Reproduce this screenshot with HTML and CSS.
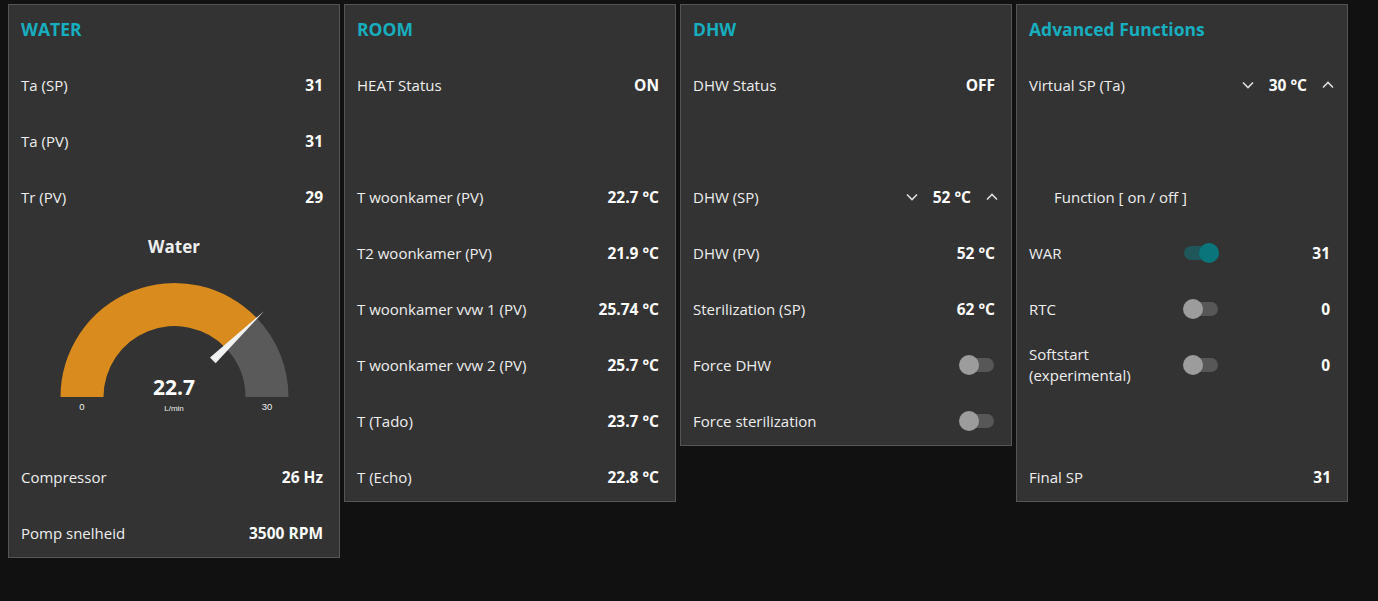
FILE: index.html
```html
<!DOCTYPE html>
<html lang="nl">
<head>
<meta charset="utf-8">
<title>Dashboard</title>
<link rel="stylesheet" href="styles.css">
</head>
<body>
<div class="dash">
  <section class="group">
    <h2 class="group-title">WATER</h2>
    <div class="row"><span class="label">Ta (SP)</span><span class="value">31</span></div>
    <div class="row"><span class="label">Ta (PV)</span><span class="value">31</span></div>
    <div class="row"><span class="label">Tr (PV)</span><span class="value">29</span></div>
    <div class="gauge">
      <svg class="gauge-svg" width="330" height="216" viewBox="0 0 330 216">
        <text class="gauge-title" x="165" y="24" text-anchor="middle">Water</text>
        <path d="M51.5 168 A114 114 0 0 1 247.8 89.1 L216.7 118.9 A71 71 0 0 0 94.5 168 Z" fill="#d98b1d"/>
        <path d="M247.8 89.1 A114 114 0 0 1 279.5 168 L236.5 168 A71 71 0 0 0 216.7 118.9 Z" fill="#5a5a5a"/>
        <polygon points="255,82.2 206.6,134.2 201.0,128.4" fill="#f2f2f2"/>
        <text class="gauge-value" x="165" y="166" text-anchor="middle">22.7</text>
        <text class="gauge-unit" x="165" y="182" text-anchor="middle">L/min</text>
        <text class="gauge-tick" x="73" y="181" text-anchor="middle">0</text>
        <text class="gauge-tick" x="258" y="181" text-anchor="middle">30</text>
      </svg>
    </div>
    <div class="row"><span class="label">Compressor</span><span class="value">26 Hz</span></div>
    <div class="row"><span class="label">Pomp snelheid</span><span class="value">3500 RPM</span></div>
  </section>

  <section class="group">
    <h2 class="group-title">ROOM</h2>
    <div class="row"><span class="label">HEAT Status</span><span class="value">ON</span></div>
    <div class="spacer"></div>
    <div class="row"><span class="label">T woonkamer (PV)</span><span class="value">22.7 °C</span></div>
    <div class="row"><span class="label">T2 woonkamer (PV)</span><span class="value">21.9 °C</span></div>
    <div class="row"><span class="label">T woonkamer vvw 1 (PV)</span><span class="value">25.74 °C</span></div>
    <div class="row"><span class="label">T woonkamer vvw 2 (PV)</span><span class="value">25.7 °C</span></div>
    <div class="row"><span class="label">T (Tado)</span><span class="value">23.7 °C</span></div>
    <div class="row"><span class="label">T (Echo)</span><span class="value">22.8 °C</span></div>
  </section>

  <section class="group">
    <h2 class="group-title">DHW</h2>
    <div class="row"><span class="label">DHW Status</span><span class="value">OFF</span></div>
    <div class="spacer"></div>
    <div class="row numeric"><span class="label">DHW (SP)</span>
      <span class="stepper">
        <svg class="chev" width="12" height="8" viewBox="0 0 12 8"><polyline points="1,1.5 6,6.5 11,1.5"/></svg>
        <span class="value">52 °C</span>
        <svg class="chev" width="12" height="8" viewBox="0 0 12 8"><polyline points="1,6.5 6,1.5 11,6.5"/></svg>
      </span>
    </div>
    <div class="row"><span class="label">DHW (PV)</span><span class="value">52 °C</span></div>
    <div class="row"><span class="label">Sterilization (SP)</span><span class="value">62 °C</span></div>
    <div class="row switch-row"><span class="label">Force DHW</span><span class="toggle"><span class="knob"></span></span></div>
    <div class="row switch-row"><span class="label">Force sterilization</span><span class="toggle"><span class="knob"></span></span></div>
  </section>

  <section class="group">
    <h2 class="group-title">Advanced Functions</h2>
    <div class="row numeric"><span class="label">Virtual SP (Ta)</span>
      <span class="stepper">
        <svg class="chev" width="12" height="8" viewBox="0 0 12 8"><polyline points="1,1.5 6,6.5 11,1.5"/></svg>
        <span class="value">30 °C</span>
        <svg class="chev" width="12" height="8" viewBox="0 0 12 8"><polyline points="1,6.5 6,1.5 11,6.5"/></svg>
      </span>
    </div>
    <div class="spacer"></div>
    <div class="row note"><span class="label">Function [ on / off ]</span></div>
    <div class="row func"><span class="label">WAR</span><span class="toggle on"><span class="knob"></span></span><span class="value">31</span></div>
    <div class="row func"><span class="label">RTC</span><span class="toggle"><span class="knob"></span></span><span class="value">0</span></div>
    <div class="row func"><span class="label">Softstart (experimental)</span><span class="toggle"><span class="knob"></span></span><span class="value">0</span></div>
    <div class="spacer"></div>
    <div class="row"><span class="label">Final SP</span><span class="value">31</span></div>
  </section>
</div>
</body>
</html>
```

FILE: styles.css
```css
html, body {
  margin: 0;
  background: #111111;
}

body {
  font-family: "Open Sans", "Noto Sans", "Liberation Sans", sans-serif;
  color: #eeeeee;
  font-size: 15px;
}

.dash {
  display: flex;
  align-items: flex-start;
  gap: 4px;
  padding: 4px 0 0 8px;
}

.group {
  width: 332px;
  box-sizing: border-box;
  background: #333333;
  border: 1px solid #555555;
  display: grid;
  grid-auto-rows: 48px;
  row-gap: 8px;
}

.group-title {
  margin: 0;
  padding-left: 12px;
  display: flex;
  align-items: center;
  font-size: 17.5px;
  font-weight: 700;
  color: #17aebf;
}

.row {
  display: flex;
  align-items: center;
  justify-content: space-between;
  padding: 0 16px 0 12px;
}

.label {
  color: #eeeeee;
}

.value {
  font-size: 15.5px;
  font-weight: 700;
  color: #ffffff;
}

.numeric {
  padding-right: 13px;
}

.stepper {
  display: flex;
  align-items: center;
  gap: 15px;
}

.chev polyline {
  fill: none;
  stroke: #dddddd;
  stroke-width: 1.6;
}

.switch-row {
  padding-right: 17px;
}

.toggle {
  position: relative;
  width: 34px;
  height: 14px;
  border-radius: 7px;
  background: #575757;
  flex: none;
}

.toggle .knob {
  position: absolute;
  top: -3px;
  left: -1px;
  width: 20px;
  height: 20px;
  border-radius: 50%;
  background: #9c9c9c;
}

.toggle.on {
  background: #1e5659;
}

.toggle.on .knob {
  left: auto;
  right: -1px;
  background: #0a767c;
}

.func {
  display: grid;
  grid-template-columns: 155px 34px 1fr;
  padding-right: 17px;
}

.func .label {
  line-height: 21px;
}

.func .value {
  text-align: right;
}

.note {
  justify-content: flex-start;
  padding-left: 37px;
}

.gauge {
  grid-row: span 4;
}

.gauge-svg {
  display: block;
}

.gauge-title {
  font-family: "Open Sans", "Noto Sans", sans-serif;
  font-size: 17px;
  font-weight: 700;
  fill: #eeeeee;
}

.gauge-value {
  font-family: "Open Sans", "Noto Sans", sans-serif;
  font-size: 21px;
  font-weight: 700;
  fill: #ffffff;
}

.gauge-unit {
  font-family: "Liberation Sans", sans-serif;
  font-size: 8px;
  fill: #eeeeee;
}

.gauge-tick {
  font-family: "Liberation Sans", sans-serif;
  font-size: 9.5px;
  fill: #eeeeee;
}
```
